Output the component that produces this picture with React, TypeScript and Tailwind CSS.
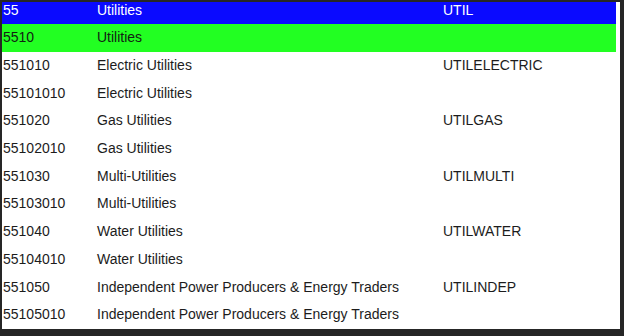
const rows = [
  { code: '55', name: 'Utilities', key: 'UTIL', tone: 'sector' },
  { code: '5510', name: 'Utilities', key: '', tone: 'group' },
  { code: '551010', name: 'Electric Utilities', key: 'UTILELECTRIC' },
  { code: '55101010', name: 'Electric Utilities', key: '' },
  { code: '551020', name: 'Gas Utilities', key: 'UTILGAS' },
  { code: '55102010', name: 'Gas Utilities', key: '' },
  { code: '551030', name: 'Multi-Utilities', key: 'UTILMULTI' },
  { code: '55103010', name: 'Multi-Utilities', key: '' },
  { code: '551040', name: 'Water Utilities', key: 'UTILWATER' },
  { code: '55104010', name: 'Water Utilities', key: '' },
  { code: '551050', name: 'Independent Power Producers & Energy Traders', key: 'UTILINDEP' },
  { code: '55105010', name: 'Independent Power Producers & Energy Traders', key: '' },
]

export default function App() {
  return (
    <div className="w-[624px] h-[336px] bg-[#262626] pt-[2px] pl-[2px] pr-[4px] pb-[7px]">
      <div className="w-full h-full bg-white overflow-hidden">
        <div
          className="w-[614px] -mt-[5.7px] text-[14px] text-[#1c1c1c]"
          style={{ fontFamily: '"Liberation Sans", Arial, sans-serif' }}
        >
          {rows.map((r, i) => {
            const bg =
              r.tone === 'sector'
                ? 'bg-[#0a0aff] text-white'
                : r.tone === 'group'
                  ? 'bg-[#22ff22] text-[#122212]'
                  : ''
            return (
              <div key={i} className={`flex items-center h-[27.7px] ${bg}`}>
                <div className="w-[95px] pl-[1px]">{r.code}</div>
                <div className="w-[346px]">{r.name}</div>
                <div>{r.key}</div>
              </div>
            )
          })}
        </div>
      </div>
    </div>
  )
}
